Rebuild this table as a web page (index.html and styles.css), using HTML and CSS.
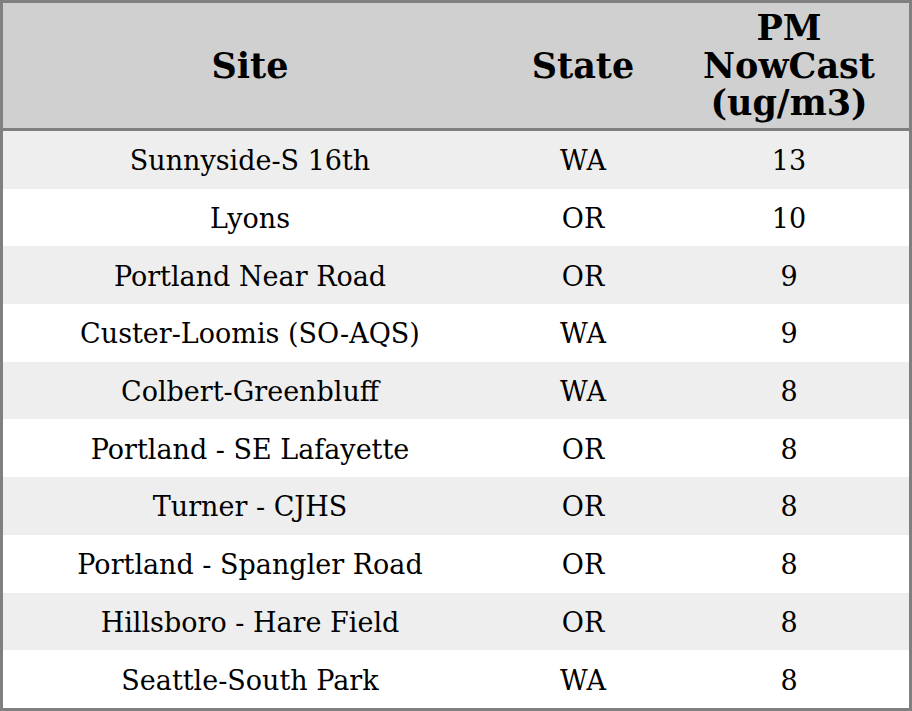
FILE: index.html
```html
<!DOCTYPE html>
<html>
<head>
<meta charset="utf-8">
<link rel="stylesheet" href="styles.css">
</head>
<body>
<table class="pm-table">
  <colgroup>
    <col class="col-site">
    <col class="col-state">
    <col class="col-pm">
  </colgroup>
  <thead>
    <tr class="head-row">
      <th>Site</th>
      <th>State</th>
      <th>PM<br>NowCast<br>(ug/m3)</th>
    </tr>
  </thead>
  <tbody>
    <tr><td>Sunnyside-S 16th</td><td>WA</td><td>13</td></tr>
    <tr><td>Lyons</td><td>OR</td><td>10</td></tr>
    <tr><td>Portland Near Road</td><td>OR</td><td>9</td></tr>
    <tr><td>Custer-Loomis (SO-AQS)</td><td>WA</td><td>9</td></tr>
    <tr><td>Colbert-Greenbluff</td><td>WA</td><td>8</td></tr>
    <tr><td>Portland - SE Lafayette</td><td>OR</td><td>8</td></tr>
    <tr><td>Turner - CJHS</td><td>OR</td><td>8</td></tr>
    <tr><td>Portland - Spangler Road</td><td>OR</td><td>8</td></tr>
    <tr><td>Hillsboro - Hare Field</td><td>OR</td><td>8</td></tr>
    <tr><td>Seattle-South Park</td><td>WA</td><td>8</td></tr>
  </tbody>
</table>
</body>
</html>
```
FILE: styles.css
```css
html, body {
  margin: 0;
  padding: 0;
  background: #ffffff;
}
.pm-table {
  width: 912px;
  height: 711px;
  box-sizing: border-box;
  border: 3px solid #808080;
  border-collapse: separate;
  border-spacing: 0;
  table-layout: fixed;
  font-family: "DejaVu Serif", serif;
  color: #000;
}
.col-site { width: 494px; }
.col-state { width: 172px; }
.col-pm { width: 240px; }
.head-row th {
  background: #d0d0d0;
  font-size: 35px;
  font-weight: bold;
  line-height: 37.5px;
  height: 125px;
  padding: 0;
  text-align: center;
  vertical-align: middle;
  border-bottom: 3px solid #808080;
}
.pm-table td {
  font-size: 27px;
  text-align: center;
  vertical-align: middle;
  padding: 2px 0 0 0;
  height: 55.7px;
}
.pm-table tbody tr:nth-child(odd) td {
  background: #eeeeee;
}
```
